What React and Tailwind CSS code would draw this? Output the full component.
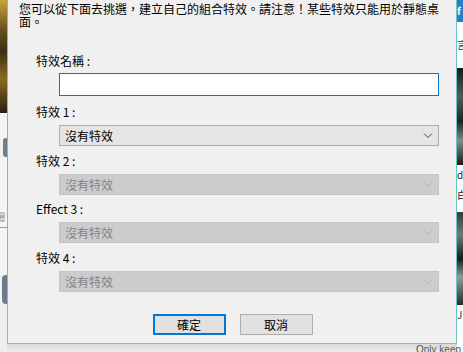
import React from "react";

const FONT = { fontFamily: '"Noto Sans CJK TC", "Noto Sans", sans-serif' };

function Chevron({ color }) {
  return (
    <svg width="10" height="6" viewBox="0 0 10 6" className="block">
      <polyline points="1,0.5 5,4.5 9,0.5" fill="none" stroke={color} strokeWidth="1" />
    </svg>
  );
}

function Combo({ disabled, className }) {
  return (
    <div
      className={
        "ml-[51px] flex h-[21px] w-[380px] items-center justify-between border pl-[5px] pr-[5px] text-[12px] leading-[13px] " +
        (disabled
          ? "border-[#c4c4c4] bg-[#cccccc] text-[#838383] "
          : "border-[#adadad] bg-[#e5e5e5] text-black ") +
        className
      }
    >
      <span>沒有特效</span>
      <Chevron color={disabled ? "#b5b5b5" : "#444444"} />
    </div>
  );
}

function Label({ children, className }) {
  return (
    <div className={"ml-[28px] h-[13px] text-[12px] leading-[13px] text-black " + className}>
      {children}
    </div>
  );
}

export default function App() {
  return (
    <div className="relative flex h-[352px] w-[463px] overflow-hidden bg-[#f2f2f2]" style={FONT}>
      {/* left backdrop strip */}
      <div className="flex w-[7px] flex-col">
        <div className="h-[113px] bg-[linear-gradient(180deg,#c9a23a_0%,#6b5420_25%,#3b2e12_45%,#8a6a22_70%,#2a2010_100%)]" />
        <div className="h-[25px] bg-[#f4f4f4]" />
        <div className="ml-[3px] h-[19px] rounded-l-[3px] bg-[#6f7f8f]" />
        <div className="h-[50px] bg-[#f4f4f4]" />
        <div className="h-[20px] overflow-hidden bg-[#f4f4f4] text-[10px] leading-[20px] text-[#9a9a9a]">
          <span className="-ml-[4px]">暑</span>
        </div>
        <div className="h-px bg-[#9a9a9a]" />
        <div className="h-[47px] bg-[#f4f4f4]" />
        <div className="ml-[2px] h-[29px] rounded-l-[4px] bg-[#6c7c8c]" />
        <div className="flex-1 bg-[#eeeeee]" />
      </div>

      {/* center column: dialog + area below */}
      <div className="flex w-[450px] flex-col">
        <div className="relative z-10 flex h-[344px] flex-col border-x border-b border-[#67c6c6] bg-[#f0f0f0]">
          <p className="ml-[11px] mt-[2px] w-[424px] text-[12px] leading-[13px] text-black">
            您可以從下面去挑選，建立自己的組合特效。請注意！某些特效只能用於靜態桌面。
          </p>

          <Label className="mt-[26px]">特效名稱 :</Label>
          <div className="ml-[51px] mt-[6px] h-[23px] w-[380px] border border-[#0078d7] bg-white" />

          <Label className="mt-[9px]">特效 1 :</Label>
          <Combo className="mt-[7px]" />

          <Label className="mt-[8px]">特效 2 :</Label>
          <Combo disabled className="mt-[7px]" />

          <Label className="mt-[7px]">Effect 3 :</Label>
          <Combo disabled className="mt-[7px]" />

          <Label className="mt-[8px]">特效 4 :</Label>
          <Combo disabled className="mt-[7px]" />

          <div className="mt-[22px] flex justify-center gap-[14px] pl-[1px]">
            <button className="flex h-[21px] w-[73px] items-center justify-center border-2 border-[#0078d7] bg-[#e1e1e1] text-[12px] leading-[13px] text-black">
              確定
            </button>
            <button className="flex h-[21px] w-[73px] items-center justify-center border border-[#adadad] bg-[#e1e1e1] text-[12px] leading-[13px] text-black">
              取消
            </button>
          </div>
        </div>
        <div className="flex-1 bg-[linear-gradient(180deg,#d9d9d9_0%,#ececec_100%)]" />
      </div>

      {/* right backdrop strip */}
      <div className="flex w-[6px] flex-col overflow-hidden">
        <div className="h-[22px] bg-[#2a7cc4] text-[10px] leading-[22px] font-bold text-white">f</div>
        <div className="h-[46px] bg-white text-[10px] leading-[46px] text-[#333]">言</div>
        <div className="h-[97px] bg-[linear-gradient(180deg,#1a1a1a_0%,#5a5a5a_30%,#222_55%,#8a8a8a_75%,#1c1c1c_100%)]" />
        <div className="h-[47px] bg-white text-[10px] leading-[20px] text-[#222]">
          <div>d</div>
          <div>白</div>
        </div>
        <div className="h-[93px] bg-[linear-gradient(180deg,#3a3a3a_0%,#777_25%,#1a1a1a_50%,#999_70%,#2a2a2a_100%)]" />
        <div className="flex-1 bg-white text-[10px] leading-[20px] text-[#333]">J</div>
      </div>

      {/* partially hidden text under the dialog */}
      <div
        className="absolute bottom-[-4px] left-[416px] z-0 whitespace-nowrap text-[10px] leading-[13px] text-[#555]"
        style={{ fontFamily: '"Liberation Sans", sans-serif' }}
      >
        Only keep
      </div>
    </div>
  );
}
